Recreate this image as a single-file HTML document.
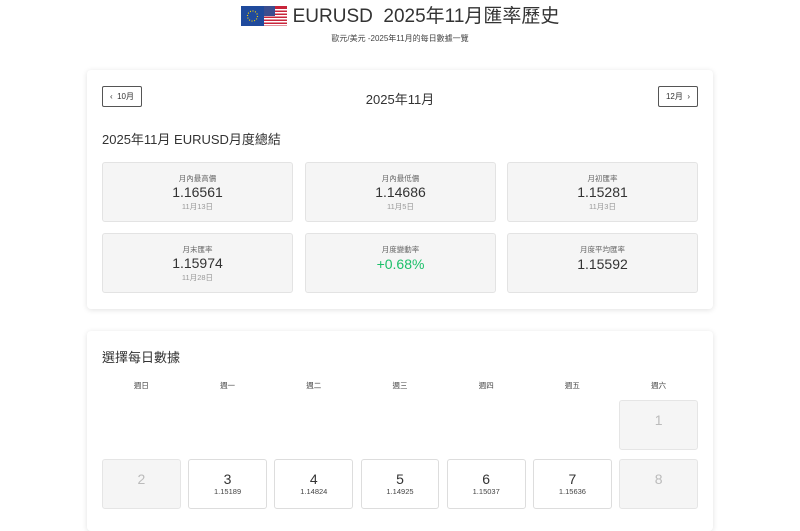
<!DOCTYPE html>
<html><head><meta charset="utf-8"><style>
*{box-sizing:border-box;margin:0;padding:0}
body{width:800px;height:500px;overflow:hidden;background:#fff;font-family:"Liberation Sans","Noto Sans CJK TC",sans-serif;color:#333}
.title{position:absolute;top:5px;left:0;width:800px;text-align:center;font-size:19px;color:#333;line-height:24px}
.title svg{vertical-align:-4px;margin-right:6px}
.sub{position:absolute;top:33px;width:800px;text-align:center;font-size:8px;color:#444}
.card{position:absolute;left:87px;width:626px;background:#fff;border-radius:4px;box-shadow:0 1px 6px rgba(0,0,0,.12)}
.btn{position:absolute;top:16px;height:21px;border:1px solid #555;border-radius:2px;font-size:8px;line-height:19px;padding:0 7px;color:#333}
.box{position:absolute;width:191px;height:60px;background:#f5f5f5;border:1px solid #e3e3e3;border-radius:3px;text-align:center}
.box .l{font-size:7.5px;color:#666;margin-top:10px}
.box .v{font-size:14px;color:#333;line-height:16px}
.box .d{font-size:7.5px;color:#999;margin-top:1px}
.grid{position:absolute;left:15px;width:596px;display:grid;grid-template-columns:repeat(7,1fr);column-gap:7.5px}
.hd{text-align:center;font-size:7.5px;color:#444}
.c{height:50px;border:1px solid #ddd;border-radius:3px;text-align:center;background:#fff}
.c.g{background:#f5f5f5;border-color:#e5e5e5}
.c .n{font-size:14px;margin-top:11px;line-height:16px}
.c.g .n{color:#bbb}
.c .p{font-size:7.5px;color:#444}
</style></head><body>
<div class="title"><svg width="46" height="20" viewBox="0 0 46 20"><rect width="23" height="20" fill="#1f4a9c"/><circle cx="11.5" cy="10" r="5" fill="none" stroke="#f5d000" stroke-width="1.2" stroke-dasharray="1 1.6"/><rect x="23" width="23" height="20" fill="#c8243a"/><rect x="23" y="3" width="23" height="1.5" fill="#fff"/><rect x="23" y="6" width="23" height="1.5" fill="#fff"/><rect x="23" y="9" width="23" height="1.5" fill="#fff"/><rect x="23" y="12" width="23" height="1.5" fill="#fff"/><rect x="23" y="15" width="23" height="1.5" fill="#fff"/><rect x="23" y="18" width="23" height="1.5" fill="#fff"/><rect x="23" width="11" height="10" fill="#3a4d8f"/></svg>EURUSD&nbsp; 2025年11月匯率歷史</div>
<div class="sub">歐元/美元 -2025年11月的每日數據一覽</div>
<div class="card" style="top:70px;height:239px">
<div class="btn" style="left:15px">‹&nbsp; 10月</div>
<div style="position:absolute;top:19px;width:626px;text-align:center;font-size:13px">2025年11月</div>
<div class="btn" style="right:15px">12月&nbsp; ›</div>
<div style="position:absolute;left:15px;top:59px;font-size:13px">2025年11月 EURUSD月度總結</div>
<div class="box" style="left:15px;top:92px"><div class="l">月內最高價</div><div class="v">1.16561</div><div class="d">11月13日</div></div>
<div class="box" style="left:218px;top:92px"><div class="l">月內最低價</div><div class="v">1.14686</div><div class="d">11月5日</div></div>
<div class="box" style="left:420px;top:92px"><div class="l">月初匯率</div><div class="v">1.15281</div><div class="d">11月3日</div></div>
<div class="box" style="left:15px;top:163px"><div class="l">月末匯率</div><div class="v">1.15974</div><div class="d">11月28日</div></div>
<div class="box" style="left:218px;top:163px"><div class="l">月度變動率</div><div class="v" style="color:#1cc06a;margin-top:1px">+0.68%</div></div>
<div class="box" style="left:420px;top:163px"><div class="l">月度平均匯率</div><div class="v" style="margin-top:1px">1.15592</div></div>
</div>
<div class="card" style="top:331px;height:200px">
<div style="position:absolute;left:15px;top:16px;font-size:13px">選擇每日數據</div>
<div class="grid" style="top:49px">
<div class="hd">週日</div><div class="hd">週一</div><div class="hd">週二</div><div class="hd">週三</div><div class="hd">週四</div><div class="hd">週五</div><div class="hd">週六</div>
</div>
<div class="grid" style="top:69px">
<div></div><div></div><div></div><div></div><div></div><div></div><div class="c g"><div class="n">1</div></div>
</div>
<div class="grid" style="top:128px">
<div class="c g"><div class="n">2</div></div>
<div class="c"><div class="n">3</div><div class="p">1.15189</div></div>
<div class="c"><div class="n">4</div><div class="p">1.14824</div></div>
<div class="c"><div class="n">5</div><div class="p">1.14925</div></div>
<div class="c"><div class="n">6</div><div class="p">1.15037</div></div>
<div class="c"><div class="n">7</div><div class="p">1.15636</div></div>
<div class="c g"><div class="n">8</div></div>
</div>
</div>
</body></html>
